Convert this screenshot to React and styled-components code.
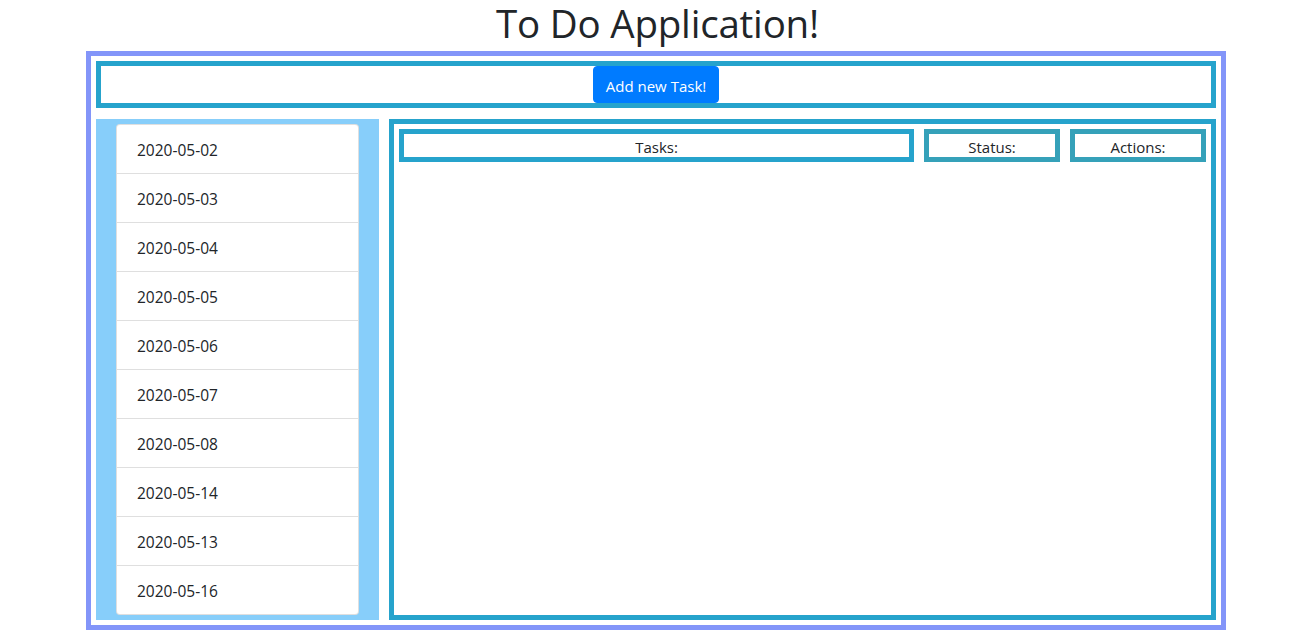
import React from "react";
import styled, { createGlobalStyle } from "styled-components";

const dates = [
  "2020-05-02",
  "2020-05-03",
  "2020-05-04",
  "2020-05-05",
  "2020-05-06",
  "2020-05-07",
  "2020-05-08",
  "2020-05-14",
  "2020-05-13",
  "2020-05-16",
];

const columns = [
  { label: "Tasks:", tone: "#26a3cc" },
  { label: "Status:", tone: "#35a1b9" },
  { label: "Actions:", tone: "#35a1b9" },
];

function App() {
  return (
    <>
      <GlobalStyle />
      <Title>To Do Application!</Title>
      <Frame>
        <TopBar>
          <AddButton type="button">Add new Task!</AddButton>
        </TopBar>
        <Body>
          <Sidebar>
            <DateList>
              {dates.map((d) => (
                <DateItem key={d}>{d}</DateItem>
              ))}
            </DateList>
          </Sidebar>
          <Board>
            <HeaderRow>
              {columns.map((c) => (
                <HeaderCell key={c.label} $tone={c.tone}>
                  {c.label}
                </HeaderCell>
              ))}
            </HeaderRow>
          </Board>
        </Body>
      </Frame>
    </>
  );
}

export default App;

const GlobalStyle = createGlobalStyle`
  body {
    margin: 0;
    background: #fff;
    color: #212529;
    font-family: "Open Sans", "Noto Sans", sans-serif;
    font-size: 16px;
  }
  * {
    box-sizing: border-box;
  }
`;

const Title = styled.h1`
  margin: 0 0 3px;
  padding-top: 1px;
  height: 48px;
  text-align: center;
  font-size: 38.5px;
  font-weight: 400;
  line-height: 44px;
  letter-spacing: -0.2px;
`;

const Frame = styled.div`
  width: 1140px;
  height: 579px;
  margin-left: 86px;
  border: 5px solid #8395f9;
  padding: 5px;
`;

const TopBar = styled.div`
  height: 47px;
  border: 5px solid #26a3cc;
  display: flex;
  justify-content: center;
`;

const AddButton = styled.button`
  height: 37px;
  padding: 2px 12px 0;
  border: 1px solid #007bff;
  border-radius: 4px;
  background: #007bff;
  color: #fff;
  font-family: inherit;
  font-size: 15px;
  line-height: 24px;
`;

const Body = styled.div`
  display: flex;
  gap: 10px;
  margin-top: 11px;
  height: 501px;
`;

const Sidebar = styled.div`
  width: 283px;
  background: #87cefa;
  padding: 5px 20px 6px;
`;

const DateList = styled.ul`
  list-style: none;
  margin: 0;
  padding: 0;
  border: 1px solid rgba(0, 0, 0, 0.125);
  border-radius: 4px;
  background: #fff;
`;

const DateItem = styled.li`
  height: 49px;
  padding: 13px 20px 11px;
  line-height: 24px;
  font-size: 15.5px;
  border-top: 1px solid rgba(0, 0, 0, 0.125);
  &:first-child {
    border-top: none;
    height: 48px;
  }
`;

const Board = styled.div`
  flex: 1;
  border: 5px solid #26a3cc;
  padding: 5px;
`;

const HeaderRow = styled.div`
  display: grid;
  grid-template-columns: 1fr 136px 136px;
  column-gap: 10px;
`;

const HeaderCell = styled.div`
  height: 33px;
  padding-top: 3px;
  border: 5px solid ${(p) => p.$tone};
  text-align: center;
  font-size: 15px;
  line-height: 20px;
`;
